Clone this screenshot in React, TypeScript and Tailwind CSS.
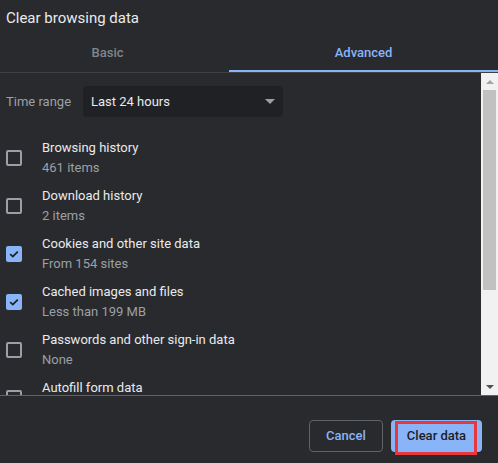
import { useState } from "react";

type Item = { id: string; title: string; sub: string; checked: boolean };

const items: Item[] = [
  { id: "history", title: "Browsing history", sub: "461 items", checked: false },
  { id: "downloads", title: "Download history", sub: "2 items", checked: false },
  { id: "cookies", title: "Cookies and other site data", sub: "From 154 sites", checked: true },
  { id: "cache", title: "Cached images and files", sub: "Less than 199 MB", checked: true },
  { id: "passwords", title: "Passwords and other sign-in data", sub: "None", checked: false },
  { id: "autofill", title: "Autofill form data", sub: "", checked: false },
];

function Checkbox({ checked }: { checked: boolean }) {
  if (checked) {
    return (
      <div className="flex h-[16px] w-[16px] items-center justify-center rounded-[2px] bg-[#8ab4f8]">
        <svg width="12" height="12" viewBox="0 0 12 12" fill="none">
          <path d="M2.2 6.2 4.8 8.6 9.8 3.6" stroke="#202124" strokeWidth="1.8" />
        </svg>
      </div>
    );
  }
  return <div className="h-[16px] w-[16px] rounded-[2px] border-2 border-[#9aa0a6]" />;
}

export default function App() {
  const [tab, setTab] = useState<"basic" | "advanced">("advanced");
  const [checked, setChecked] = useState<Record<string, boolean>>(
    Object.fromEntries(items.map((i) => [i.id, i.checked]))
  );

  return (
    <div
      className="flex h-[463px] w-[498px] flex-col overflow-hidden bg-[#292a2d] text-[13px] text-[#e8eaed]"
      style={{ fontFamily: "Roboto, 'Liberation Sans', sans-serif" }}
    >
      {/* Title */}
      <div className="flex h-[33px] items-center px-[6px] pt-[3px] text-[15px] text-[#e8eaed]">
        Clear browsing data
      </div>

      {/* Tabs */}
      <div className="flex h-[40px] border-b border-[#3c4043]">
        <button
          className={`flex w-[229px] items-center justify-center pr-[14px] font-medium ${
            tab === "basic" ? "border-b-2 border-[#8ab4f8] text-[#8ab4f8]" : "text-[#80868b]"
          }`}
          onClick={() => setTab("basic")}
        >
          Basic
        </button>
        <button
          className={`flex flex-1 items-center justify-center pt-[2px] font-medium ${
            tab === "advanced" ? "border-b-2 border-[#8ab4f8] text-[#8ab4f8]" : "text-[#80868b]"
          }`}
          onClick={() => setTab("advanced")}
        >
          Advanced
        </button>
      </div>

      {/* Scrollable body */}
      <div className="flex h-[323px] border-b border-[#5f6368]">
        <div className="flex-1 overflow-hidden">
          <div className="flex items-center pt-[13px]">
            <span className="w-[83px] pl-[6px] text-[#9aa0a6]">Time range</span>
            <div className="flex h-[31px] w-[200px] items-center justify-between rounded-[4px] bg-[#202124] pl-[8px] pr-[8px] text-[#e8eaed]">
              <span>Last 24 hours</span>
              <svg width="10" height="5" viewBox="0 0 10 5">
                <path d="M0 0h10L5 5z" fill="#9aa0a6" />
              </svg>
            </div>
          </div>

          <div className="mt-[17px] flex flex-col">
            {items.map((item) => (
              <div
                key={item.id}
                className="flex h-[48px] shrink-0 cursor-pointer items-center"
                onClick={() => setChecked({ ...checked, [item.id]: !checked[item.id] })}
              >
                <div className="w-[42px] pl-[6px]">
                  <Checkbox checked={checked[item.id]} />
                </div>
                <div className="flex flex-col">
                  <span className="h-[20px] leading-[20px] text-[#e8eaed]">{item.title}</span>
                  <span className="h-[20px] leading-[20px] text-[#9aa0a6]">{item.sub}</span>
                </div>
              </div>
            ))}
          </div>
        </div>

        {/* Scrollbar */}
        <div className="flex w-[17px] flex-col items-center bg-[#f1f1f1]">
          <div className="flex h-[17px] w-full items-center justify-center">
            <svg width="8" height="4" viewBox="0 0 8 4">
              <path d="M0 4h8L4 0z" fill="#a3a3a3" />
            </svg>
          </div>
          <div className="h-[200px] w-[13px] bg-[#c1c1c1]" />
          <div className="flex-1" />
          <div className="flex h-[17px] w-full items-center justify-center">
            <svg width="8" height="4" viewBox="0 0 8 4">
              <path d="M0 0h8L4 4z" fill="#505050" />
            </svg>
          </div>
        </div>
      </div>

      {/* Footer */}
      <div className="flex flex-1 items-start justify-end gap-[8px] pr-[16px] pt-[24px]">
        <button className="h-[32px] w-[74px] rounded-[4px] border border-[#5f6368] font-medium text-[#8ab4f8]">
          Cancel
        </button>
        <div className="relative">
          <button className="h-[32px] w-[91px] rounded-[4px] bg-[#8ab4f8] font-medium text-[#202124]">
            Clear data
          </button>
          <div className="pointer-events-none absolute left-[4px] top-[1px] h-[34px] w-[82px] border-[3px] border-[#e8383d]" />
        </div>
      </div>
    </div>
  );
}
